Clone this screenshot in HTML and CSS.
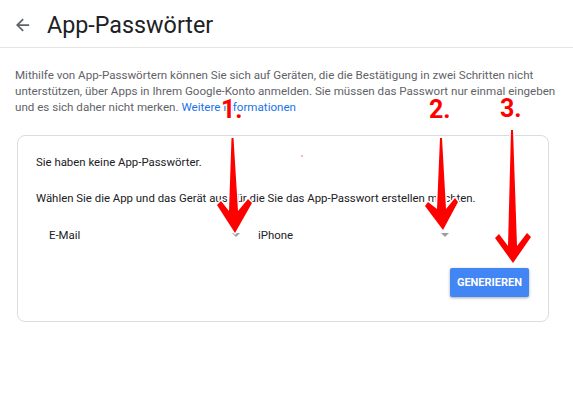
FILE: index.html
```html
<!DOCTYPE html>
<html lang="de">
<head>
<meta charset="utf-8">
<link rel="stylesheet" href="styles.css">
</head>
<body>
<header class="topbar">
  <svg class="back" width="14" height="14" viewBox="0 0 16 16"><path d="M15 7H3.8l5.1-5.1L7.5.5 0 8l7.5 7.5 1.4-1.4L3.8 9H15z" fill="#5f6368"/></svg>
  <h1 class="title">App-Passwörter</h1>
</header>
<main class="content">
  <p class="intro">Mithilfe von App-Passwörtern können Sie sich auf Geräten, die die Bestätigung in zwei Schritten nicht unterstützen, über Apps in Ihrem Google-Konto anmelden. Sie müssen das Passwort nur einmal eingeben und es sich daher nicht merken. <a class="link" href="#">Weitere Informationen</a></p>
  <section class="card">
    <p class="line">Sie haben keine App-Passwörter.</p>
    <p class="line second">Wählen Sie die App und das Gerät aus, für die Sie das App-Passwort erstellen möchten.</p>
    <div class="selects">
      <div class="select"><span>E-Mail</span><i class="caret"></i></div>
      <div class="select"><span>iPhone</span><i class="caret"></i></div>
    </div>
    <div class="actions"><button class="btn">GENERIEREN</button></div>
  </section>
</main>
<svg class="annot" width="573" height="412" viewBox="0 0 573 412">
  <g fill="#f00" stroke="#fff" stroke-width="3" stroke-linejoin="round" paint-order="stroke">
    <path d="M231.5 138 L233.5 138 L238 211 L248 199 L252 203 L235 233 L217 205 L221 201 L229 211 Z"/>
    <path d="M440 138 L442 138 L446 209 L455 198 L458 202 L443 230 L425 206 L428 202 L437 209 Z"/>
    <path d="M511 130 L513 130 L517 246 L527 233 L531 237 L513 263 L495 238 L499 234 L508 246 Z"/>
  </g>
  <g class="nums" fill="#f00" font-family="Roboto, 'Liberation Sans', sans-serif" font-weight="700" font-size="25">
    <text x="221" y="118" stroke="#fff" stroke-width="3" paint-order="stroke">1.</text>
    <text x="429" y="118">2.</text>
    <text x="500" y="117">3.</text>
  </g>
  <circle cx="302" cy="156" r="1" fill="#f7a0a0"/>
</svg>
</body>
</html>
```
FILE: styles.css
```css
* { box-sizing: border-box; }
html, body { margin: 0; padding: 0; background: #fff; }
body {
  font-family: Roboto, "Liberation Sans", Arial, sans-serif;
  color: #202124;
  width: 573px;
  height: 412px;
  overflow: hidden;
  position: relative;
}
.topbar {
  height: 48px;
  display: flex;
  align-items: center;
  padding-left: 16px;
  border-bottom: 1px solid #e6e6e6;
}
.back { display: block; margin-right: 17px; position: relative; top: 1px; }
.title {
  margin: 0;
  font-weight: 400;
  font-size: 23.3px;
  color: #202124;
  position: relative;
  top: 1px;
}
.content { padding: 19px 2px 0 15px; }
.intro {
  margin: 0;
  font-size: 11.6px;
  line-height: 16px;
  color: #5f6368;
}
.link { color: #1a73e8; text-decoration: none; }
.card {
  margin: 20px 22px 0 2px;
  border: 1px solid #dadce0;
  border-radius: 8px;
  padding: 18px 19px 24px 18px;
}
.line { margin: 0; font-size: 11.4px; line-height: 16px; color: #202124; }
.line.second { margin-top: 20px; }
.selects { display: flex; margin-top: 21px; }
.select {
  width: 209px;
  display: flex;
  align-items: center;
  justify-content: space-between;
  padding: 0 5px 0 13px;
  height: 16px;
  font-size: 11.4px;
}
.caret {
  width: 0; height: 0;
  border-left: 4px solid transparent;
  border-right: 4px solid transparent;
  border-top: 4px solid #9e9e9e;
}
.actions { display: flex; justify-content: flex-end; margin-top: 25px; }
.btn {
  font-family: Roboto, "Liberation Sans", Arial, sans-serif;
  background: #4285f4;
  color: #fff;
  border: 0;
  border-radius: 2px;
  height: 29px;
  padding: 0 7px;
  font-size: 11px;
  font-weight: 700;
  box-shadow: 0 1px 3px rgba(0,0,0,0.35);
}
.annot { position: absolute; left: 0; top: 0; pointer-events: none; }
```
